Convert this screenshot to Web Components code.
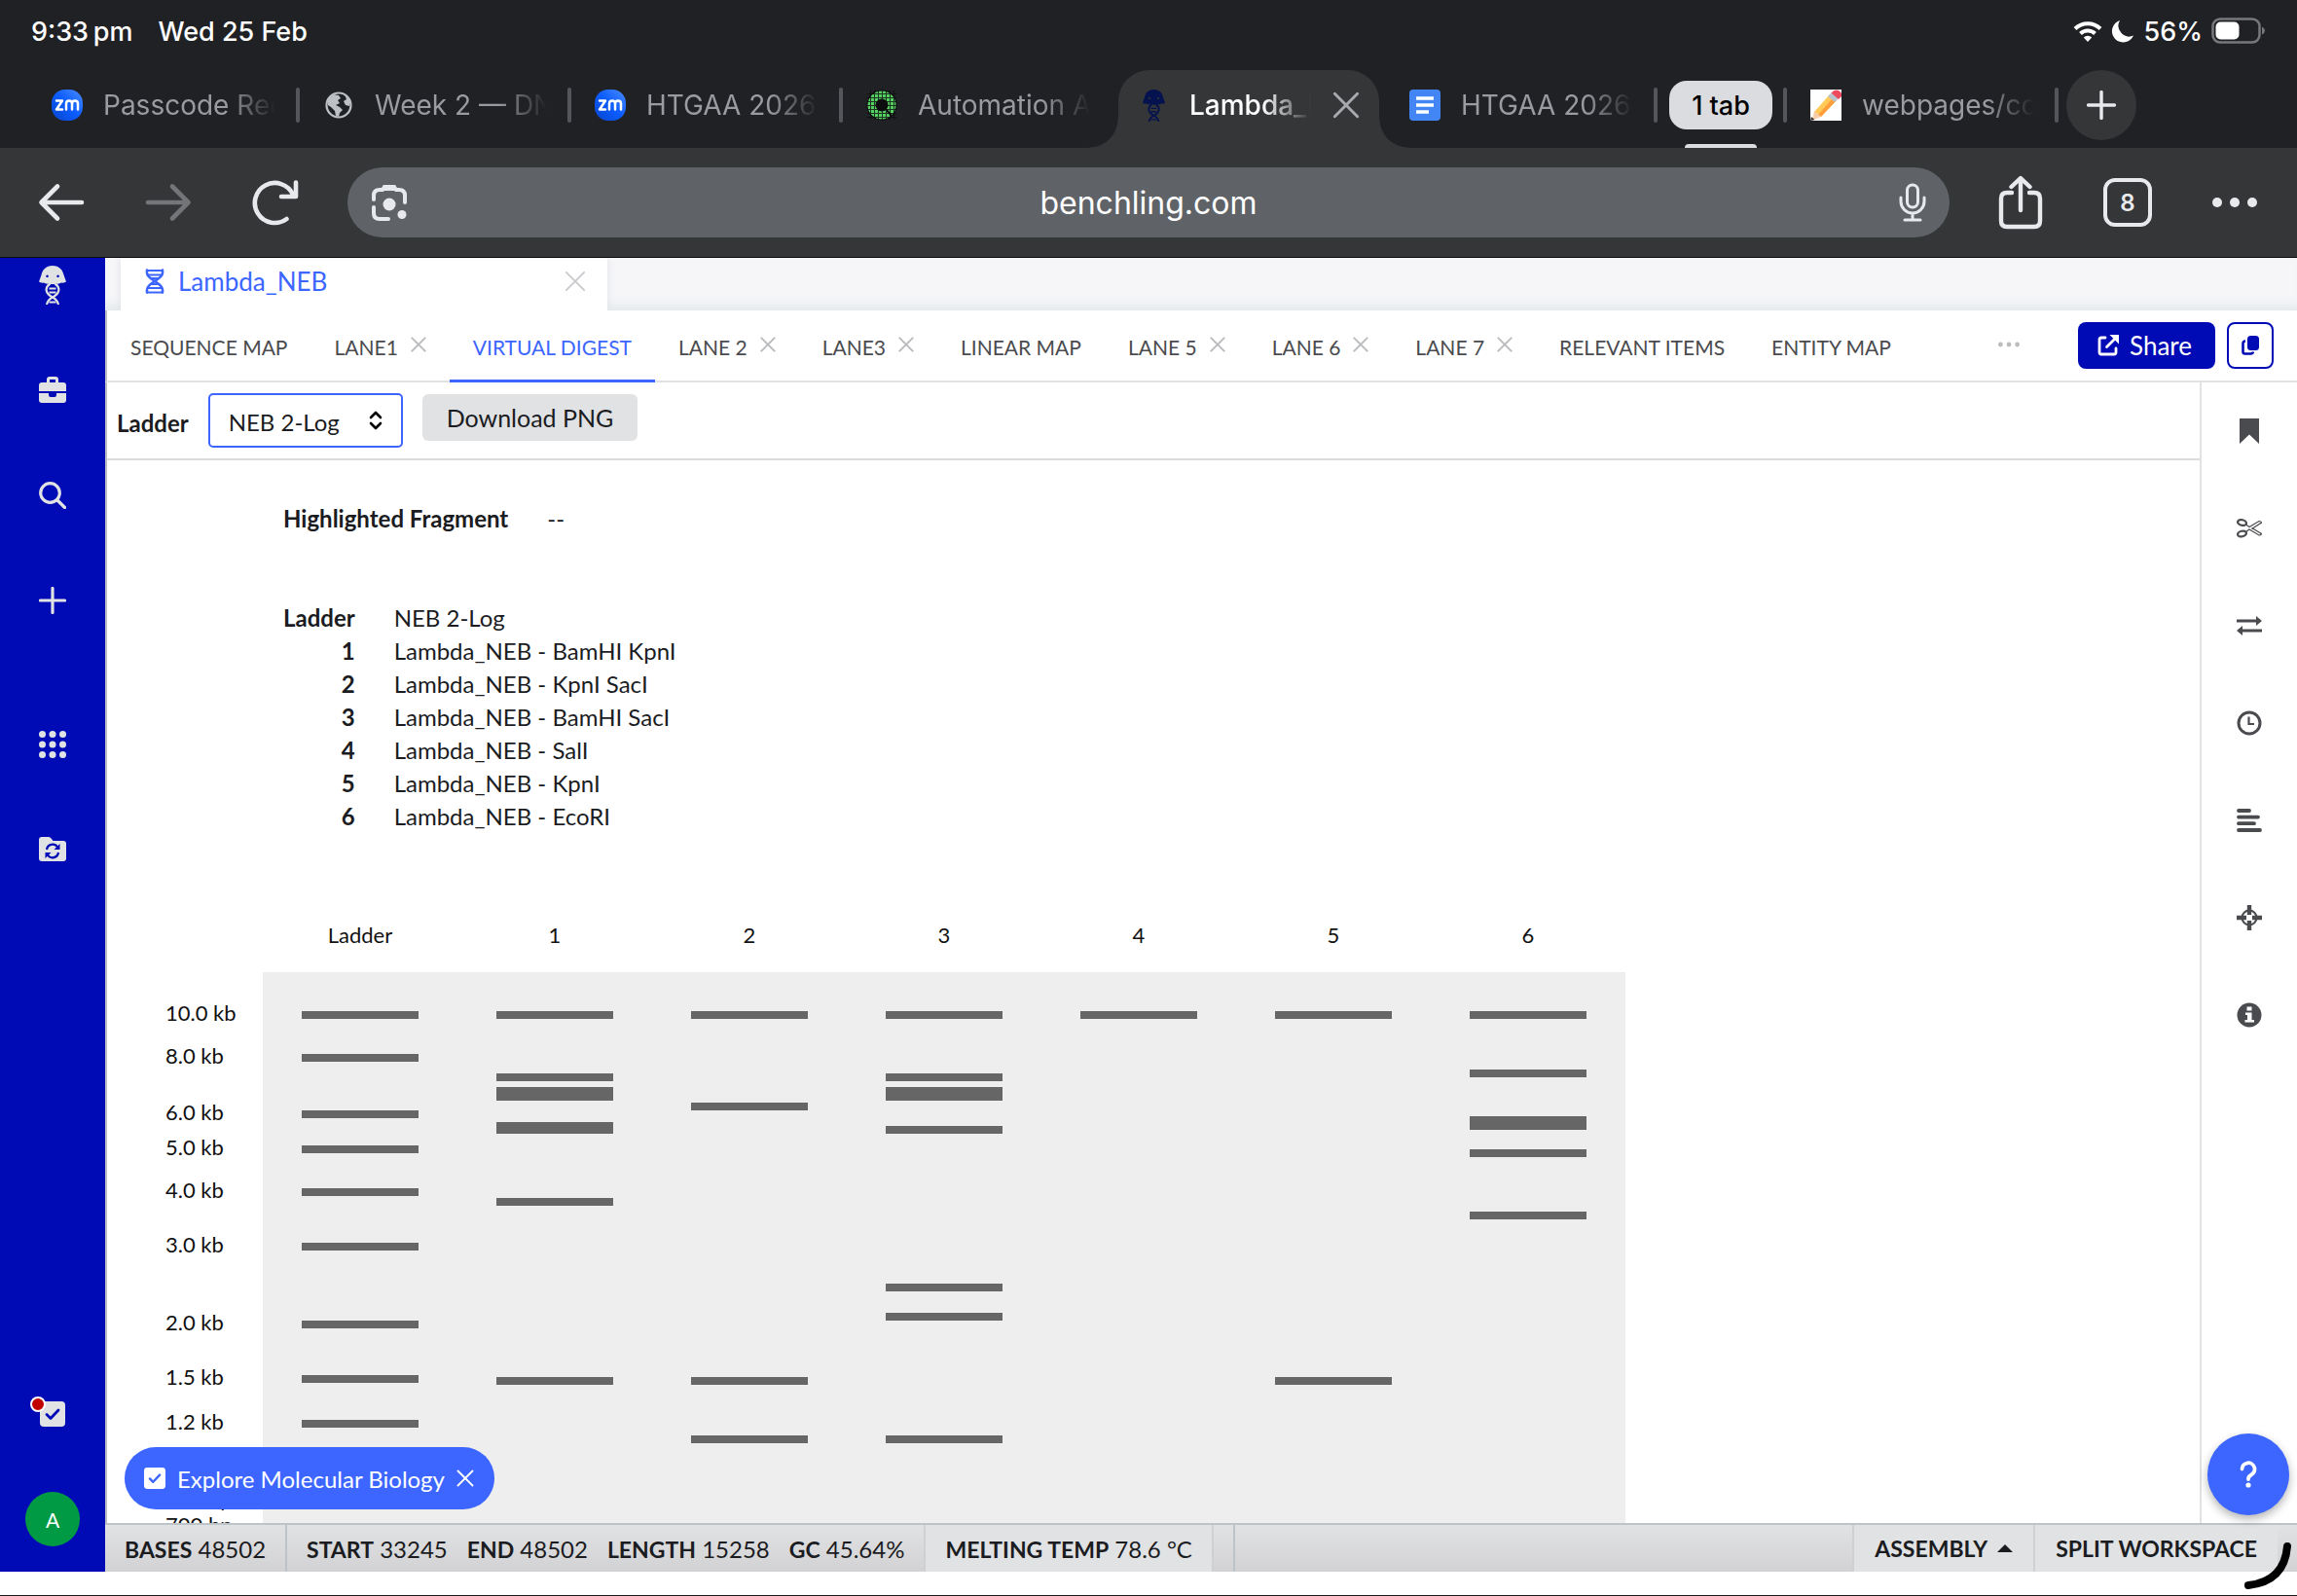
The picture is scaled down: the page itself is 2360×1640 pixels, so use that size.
<!DOCTYPE html>
<html lang="en">
<head>
<meta charset="utf-8">
<title>Lambda_NEB · Benchling</title>
<style>
  body {
    margin: 0;
    height: 100vh;
    display: flex;
    flex-direction: column;
    overflow: hidden;
    background: #fff;
    font-family: Lato, "Liberation Sans", sans-serif;
    font-size: 24px;
    color: #1b1c1f;
  }
  benchling-app { flex: 1; min-height: 0; }
  .home-edge { height: 24px; border-bottom: 1px solid #1a1a1c; }
</style>
</head>
<body>
<device-status></device-status>
<tab-strip>
  <browser-tab icon="zoom">Passcode Req</browser-tab>
  <browser-tab icon="globe">Week 2 — DNA</browser-tab>
  <browser-tab icon="zoom">HTGAA 2026</browser-tab>
  <browser-tab icon="ring" last>Automation Art</browser-tab>
  <browser-tab icon="jelly" active>Lambda_NEB</browser-tab>
  <browser-tab icon="docs">HTGAA 2026</browser-tab>
  <tab-group>1 tab</tab-group>
  <browser-tab icon="memo">webpages/con</browser-tab>
</tab-strip>
<browser-toolbar></browser-toolbar>
<benchling-app></benchling-app>
<div class="home-edge"></div>

<script>
const ICONS = {
  wifi: ['0 0 30 24', '<g fill="none" stroke="#fff" stroke-width="4"><path d="M2 9.500a18.500 18.500 0 0 1 26 0"/><path d="M7.500 14.500a10.800 10.800 0 0 1 15 0"/></g><path fill="#fff" d="M15 23l-4.200-4.600a6 6 0 0 1 8.400 0z"/>'],
  moon: ['0 0 24 24', '<path fill="#fff" d="M9 1a11.500 11.500 0 1 0 14 15.500A11 11 0 0 1 9 1z"/>'],
  battery: ['0 0 56 28', '<rect x="1.500" y="1.500" width="48" height="24" rx="7.500" fill="none" stroke="#77787b" stroke-width="2.500"/><rect x="4.500" y="4.500" width="24" height="18" rx="5" fill="#fff"/><path fill="#77787b" d="M52 9.500q3 1.500 3 4t-3 4z"/>'],
  zoom: ['0 0 32 32', '<defs><linearGradient id="z" x1="1" y1="0" x2="0" y2="1"><stop offset="0" stop-color="#4a8cff"/><stop offset=".5" stop-color="#0b5cff"/><stop offset="1" stop-color="#0845c8"/></linearGradient></defs><rect width="32" height="32" rx="14" fill="url(#z)"/><g fill="none" stroke="#fff" stroke-width="2.500" stroke-linejoin="round" stroke-linecap="round"><path d="M5 11.500h6l-6 9h6"/><path d="M15 20.500v-6q0-3 3-3t3 3v6M21 14.500q0-3 3-3t3 3v6"/></g>'],
  globe: ['0 0 32 32', '<circle cx="16" cy="16" r="12.500" fill="none" stroke="#bdc1c6" stroke-width="2.200"/><path fill="#bdc1c6" d="M5 10l6-5 5 1 2 3-3 2 2 3-4 2 4 2 3 3-3 3-1 4-3-1-1-5-4-4-3-2zM22 5l6 7-1 5-4-1-2-4 3-2z"/>'],
  ring: ['0 0 32 32', '<circle cx="16" cy="16" r="15.500" fill="#0d0d10"/><circle cx="16" cy="16" r="10.500" fill="none" stroke="#56cf62" stroke-width="8"/><path d="M1 4.500h30M1 8.500h30M1 12.500h30M1 16.500h30M1 20.500h30M1 24.500h30M1 28.500h30M4.500 1v30M8.500 1v30M12.500 1v30M16.500 1v30M20.500 1v30M24.500 1v30M28.500 1v30" stroke="#0d0d10" stroke-width="1" opacity=".8"/><path d="M14 13l12 14" stroke="#0d0d10" stroke-width="2"/>'],
  jelly: ['0 0 28 40', '<path fill="currentColor" fill-rule="evenodd" d="M14 0c7 0 10.500 4.500 11.500 9.500l2.500 7q-2 1.500-5 1-2 1.500-5 1-4 1-8 0-3 .5-5-1-3 .5-5-1l2.500-7C3.500 4.500 7 0 14 0zM8.500 9.500a1.300 1.300 0 1 0 .1 0zM19.500 9.500a1.300 1.300 0 1 0 .1 0z"/><g fill="none" stroke="currentColor" stroke-width="2.200"><path d="M11.500 18.500c-6 4-5 10 2.500 14q5 2.500 6 7.500M16.500 18.500c6 4 5 10-2.500 14q-5 2.500-6 7.500"/><path d="M10.500 23.500h7M10.500 27.500h7M10.500 37.500h7" stroke-width="1.800"/></g>'],
  docs: ['0 0 32 32', '<rect width="32" height="32" rx="4" fill="#4285f4"/><path stroke="#fff" stroke-width="3.400" d="M7 9h18M7 16h18M7 23h13"/>'],
  memo: ['0 0 32 32', '<path fill="#fff" d="M0 0h32v32H0z"/><path fill="#ffca55" d="M4 23L20 5l7 6L11 28z"/><path fill="#ff9f3c" d="M8 26L23.500 8l3.500 3L11 28z"/><path fill="#f7cda9" d="M4 22l7 6-9 3.500z"/><path fill="#3a2e2c" d="M1 28l3.500 3L0 32z"/><path fill="#b9c3cc" d="M18 7l4-4 7 6-4 4z"/><path fill="#ee4b5f" d="M21.500 3.500Q25-1 29 1q4 2 3 6l-3 3z"/>'],
  close: ['0 0 24 24', '<path d="M2 2l20 20M22 2L2 22" stroke="currentColor" stroke-width="var(--stroke, 2.500)" stroke-linecap="round"/>'],
  plus: ['0 0 28 28', '<path d="M14 1.500v25M1.500 14h25" stroke="currentColor" stroke-width="var(--stroke, 3.200)" stroke-linecap="round"/>'],
  back: ['0 0 48 40', '<path d="M45 20H4M20 3.500L3.500 20 20 36.500" fill="none" stroke="currentColor" stroke-width="4.600" stroke-linecap="round" stroke-linejoin="round"/>'],
  forward: ['0 0 48 40', '<path d="M3 20h41M28 3.500L44.500 20 28 36.500" fill="none" stroke="currentColor" stroke-width="4.600" stroke-linecap="round" stroke-linejoin="round"/>'],
  reload: ['0 0 48 48', '<path d="M35.500 41A20.500 20.500 0 1 1 42 16M45 3.500V18H30" fill="none" stroke="currentColor" stroke-width="4.600" stroke-linecap="round" stroke-linejoin="round"/>'],
  lens: ['0 0 38 38', '<g fill="none" stroke="currentColor" stroke-width="4" stroke-linecap="round"><path d="M3 16v-4q0-6 6-6h3l2-3h10l2 3h3q6 0 6 6v7M3 24v6q0 6 6 6h9"/></g><path fill="currentColor" d="M12 7l3-6h8l3 6z"/><circle cx="19" cy="21" r="6.500" fill="currentColor"/><circle cx="32" cy="31.500" r="4.500" fill="currentColor"/>'],
  mic: ['0 0 28 40', '<g fill="none" stroke="currentColor" stroke-width="3" stroke-linecap="round"><rect x="8.500" y="2" width="11" height="23" rx="5.500"/><path d="M2 15v4a12 12 0 0 0 24 0v-4M14 31v7M6 38h16"/></g>'],
  share: ['0 0 46 56', '<g fill="none" stroke="currentColor" stroke-width="4.400" stroke-linecap="round" stroke-linejoin="round"><path d="M14 18H9q-6 0-6 6v23q0 6 6 6h28q6 0 6-6V24q0-6-6-6h-5"/><path d="M23 36V4M13.500 12L23 3l9.500 9"/></g>'],
  dots: ['0 0 46 12', '<g fill="currentColor"><circle cx="5" cy="6" r="5"/><circle cx="23" cy="6" r="5"/><circle cx="41" cy="6" r="5"/></g>'],
  briefcase: ['0 0 28 28', '<path fill="currentColor" fill-rule="evenodd" d="M8 6V3q0-3 3-3h6q3 0 3 3v3h5q3 0 3 3v6H0V9q0-3 3-3zm3 0h6V3h-6zM0 17h10v2q0 2 2 2h4q2 0 2-2v-2h10v7q0 3-3 3H3q-3 0-3-3z"/>'],
  search: ['0 0 28 28', '<g fill="none" stroke="currentColor" stroke-width="3.200" stroke-linecap="round"><circle cx="11.500" cy="11.500" r="9.800"/><path d="M19 19l7.500 7.500"/></g>'],
  grid: ['0 0 28 28', '<g fill="currentColor">' + [3.5, 14, 24.5].map(y => [3.5, 14, 24.5].map(x => `<circle cx="${x}" cy="${y}" r="3.500"/>`).join('')).join('') + '</g>'],
  sync: ['0 0 28 26', '<path fill="currentColor" d="M0 3q0-3 3-3h7q1.500 0 3 2l1.500 2H25q3 0 3 3v15q0 3-3 3H3q-3 0-3-3z"/><g fill="none" stroke="#000bb5" stroke-width="2.200"><path d="M8 13a6 6 0 0 1 11-2.500M20 16a6 6 0 0 1-11 2.500"/></g><path fill="#000bb5" d="M21.500 7v6h-6zM6.500 22v-6h6z"/>'],
  tasks: ['0 0 26 26', '<rect width="26" height="26" rx="4" fill="currentColor"/><path d="M7 13.500l4 4 8-8.500" fill="none" stroke="var(--tick, #000bb5)" stroke-width="2.800" stroke-linecap="round" stroke-linejoin="round"/>'],
  dna: ['0 0 20 26', '<g fill="none" stroke="currentColor" stroke-width="2.600" stroke-linecap="round"><path d="M2 1.500v3c0 7 16 10 16 17v3M18 1.500v3c0 7-16 10-16 17v3"/><path d="M2 2h16M3 6.500h14M7 10h6M7 16h6M3 20h14M2 24.500h16" stroke-width="2"/></g>'],
  external: ['0 0 22 22', '<g fill="none" stroke="currentColor" stroke-width="2.800" stroke-linecap="round" stroke-linejoin="round"><path d="M8 3H4Q2 3 2 5v13q0 2 2 2h13q2 0 2-2v-4M9.500 12.500L19 3"/></g><path fill="currentColor" d="M12.500 0H22v9.500z"/>'],
  copy: ['0 0 18 20', '<rect x="6" y="0" width="12" height="15" rx="3.500" fill="currentColor"/><path d="M4 5.500Q1.500 5.500 1.500 8v8.500q0 2 2 2h6q2 0 2.500-2" fill="none" stroke="currentColor" stroke-width="2.600"/>'],
  chevrons: ['0 0 14 20', '<path d="M2 7l5-5 5 5M2 13l5 5 5-5" fill="none" stroke="#000" stroke-width="2.600" stroke-linecap="round" stroke-linejoin="round"/>'],
  bookmark: ['0 0 26 26', '<path fill="currentColor" d="M3 0h20v26l-10-9.500L3 26z"/>'],
  scissors: ['0 0 26 20', '<g fill="none" stroke="currentColor"><ellipse cx="5.500" cy="4" rx="4.500" ry="2.800" stroke-width="2.200" transform="rotate(12 5.500 4)"/><ellipse cx="5.500" cy="15.500" rx="4.500" ry="2.800" stroke-width="2.200" transform="rotate(-12 5.500 15.500)"/><path stroke-width="1.200" d="M9.500 6L13 8.500 23 2.500q2 0 2.500 1.500L15.500 10.500M9.500 13.500L13 11l10 6q2 0 2.500-1.500L15.500 9.500"/></g>'],
  swap: ['0 0 26 20', '<path fill="currentColor" d="M0 3.500h20V0l6 5-6 5V6.500H0zM26 13.500H6V10L0 15l6 5v-3.500h20z"/>'],
  clock: ['0 0 26 26', '<circle cx="13" cy="13" r="11" fill="none" stroke="currentColor" stroke-width="3"/><path d="M12.500 6.500V14H18" fill="none" stroke="currentColor" stroke-width="2.200"/>'],
  align: ['0 0 26 24', '<path fill="none" stroke="currentColor" stroke-width="3.800" stroke-linecap="round" d="M2 2h11M2 8.600h20M2 15.200h16M2 22h22"/>'],
  target: ['0 0 26 26', '<circle cx="13" cy="13" r="7.500" fill="none" stroke="currentColor" stroke-width="2"/><path stroke="currentColor" stroke-width="4.400" d="M13 0v10M13 16v10M0 13h10M16 13h10"/>'],
  info: ['0 0 26 26', '<circle cx="13" cy="13" r="12.500" fill="currentColor"/><path fill="#fff" d="M10.500 4.500h5v4h-5zM9 10.500h6.500V18H18v2.500H8.500V18h2.500v-5H9z"/>'],
  help: ['0 0 20 28', '<path d="M3.500 8.500a6.500 6.500 0 1 1 9.500 6Q10 16 10 19" fill="none" stroke="currentColor" stroke-width="3.800" stroke-linecap="round"/><circle cx="10" cy="25" r="2.600" fill="currentColor"/>'],
  caret: ['0 0 16 8', '<path fill="currentColor" d="M0 8l8-8 8 8z"/>']
};

// Styles every component shares
const BASE = `
  :host, *, *::before, *::after { box-sizing: border-box; }
  button { font: inherit; color: inherit; background: none; border: 0; padding: 0; margin: 0; cursor: pointer;
           display: flex; align-items: center; justify-content: center; }
  a { color: inherit; text-decoration: none; }
`;

class BaseElement extends HTMLElement {
  constructor() {
    super();
    this.attachShadow({ mode: 'open' });
  }

  connectedCallback() {
    this.shadowRoot.innerHTML = `<style>${BASE}${this.styles()}</style>${this.markup()}`;
  }
}

// <ui-icon name="plus" w="28">
class UiIcon extends BaseElement {
  styles() {
    return `:host { display: inline-flex; flex: none; } svg { display: block; }`;
  }

  markup() {
    const [box, body] = ICONS[this.getAttribute('name')];
    const [, , bw, bh] = box.split(' ').map(Number);
    const w = Number(this.getAttribute('w')) || bw;
    return `<svg width="${w}" height="${Math.round(w * bh / bw)}" viewBox="${box}" aria-hidden="true">${body}</svg>`;
  }
}

class DeviceStatus extends BaseElement {
  styles() {
    return `
      :host { display: flex; justify-content: space-between; align-items: center; height: 72px; padding: 0 32px 8px;
              background: #202124; color: #fff; font: 500 27px Inter, sans-serif; }
      div { display: flex; align-items: center; gap: 26px; }
      .right { gap: 9px; }
    `;
  }

  markup() {
    return `
      <div><span>9:33&#8201;pm</span><span>Wed 25 Feb</span></div>
      <div class="right"><ui-icon name="wifi"></ui-icon><ui-icon name="moon"></ui-icon><span>56%</span><ui-icon name="battery"></ui-icon></div>
    `;
  }
}

class TabStrip extends BaseElement {
  styles() {
    return `
      :host { display: flex; height: 80px; padding-left: 27px; background: #202124; color: #9a9ba1; font: 28px Inter, sans-serif; }
      .add { width: 72px; height: 72px; margin-left: 10px; border-radius: 50%; background: #353638; color: #e8e9ed; }
    `;
  }

  markup() {
    return `<slot></slot><button class="add" aria-label="New tab"><ui-icon name="plus" w="30"></ui-icon></button>`;
  }
}

class BrowserTab extends BaseElement {
  styles() {
    return `
      :host { display: flex; position: relative; width: 279px; height: 72px; align-items: center; padding: 0 23px 0 26px; }
      ui-icon { color: #04124f; width: 32px; justify-content: center; }
      .title { flex: 1; min-width: 0; margin-left: 21px; overflow: hidden; white-space: nowrap; text-align: left;
               -webkit-mask-image: linear-gradient(90deg, #000 calc(100% - 50px), transparent); }
      .rule { position: absolute; right: -2px; top: 18px; width: 4px; height: 36px; border-radius: 2px; background: #55565c; }
      :host([active]) .rule, :host([last]) .rule { display: none; }
      :host([active]) { color: #fff; height: 80px; padding-bottom: 8px; font-weight: 500; }
      :host([active])::before { content: ""; position: absolute; left: 6px; right: 5px; top: 0; bottom: 0;
                                background: #353638; border-radius: 32px 32px 0 0; }
      .flare { position: absolute; bottom: 0; width: 30px; height: 30px; }
      .flare.l { left: -24px; background: radial-gradient(circle at 0 0, transparent 29px, #353638 30px); }
      .flare.r { right: -25px; background: radial-gradient(circle at 100% 0, transparent 29px, #353638 30px); }
      :host([active]) ui-icon, :host([active]) .title, button { position: relative; }
      button ui-icon { color: #a9aaaf !important; }
      button { margin-left: 20px; }
    `;
  }

  markup() {
    const active = this.hasAttribute('active');
    return `
      <ui-icon name="${this.getAttribute('icon')}" w="${active ? 23 : 32}"></ui-icon>
      <span class="title"><slot></slot></span>
      ${active ? '<span class="flare l"></span><span class="flare r"></span><button aria-label="Close tab"><ui-icon name="close" w="28"></ui-icon></button>' : ''}
      <span class="rule"></span>
    `;
  }
}

class TabGroup extends BaseElement {
  styles() {
    return `
      :host { display: flex; flex-direction: column; align-items: center; justify-content: space-between; height: 80px;
              padding: 11px 13px 0 14px; position: relative; }
      button { height: 50px; width: 106px; border-radius: 18px; background: #dadce0; color: #000; font-weight: 500; font-size: 27px; }
      .under { width: 74px; height: 4px; border-radius: 4px 4px 0 0; background: #dadce0; }
      .rule { position: absolute; right: -2px; top: 18px; width: 4px; height: 36px; border-radius: 2px; background: #55565c; }
    `;
  }

  markup() {
    return `<button><slot></slot></button><span class="under"></span><span class="rule"></span>`;
  }
}

class BrowserToolbar extends BaseElement {
  styles() {
    return `
      :host { display: flex; align-items: center; height: 113px; padding: 0 41px 0 39px; background: #353638; color: #e8e9ed;
              border-bottom: 1px solid #0b0b0c; font-family: Inter, sans-serif; }
      .nav { display: flex; align-items: center; gap: 62px; }
      .nav .off { color: #747578; }
      .omni { flex: 1; display: flex; align-items: center; height: 72px; margin: 0 50px; padding: 0 24px; border-radius: 36px; background: #5f6368; }
      input { flex: 1; min-width: 0; border: 0; outline: 0; background: none; color: #fff; text-align: center; font: 32px Inter, sans-serif; padding: 0 10px 0 0; }
      .actions { display: flex; align-items: center; gap: 62px; }
      .count { width: 50px; height: 50px; border: 4px solid #e8e9ed; border-radius: 12px; font-size: 24px; font-weight: 600; }
    `;
  }

  markup() {
    return `
      <div class="nav">
        <button aria-label="Back"><ui-icon name="back"></ui-icon></button>
        <button aria-label="Forward" class="off"><ui-icon name="forward"></ui-icon></button>
        <button aria-label="Reload"><ui-icon name="reload"></ui-icon></button>
      </div>
      <div class="omni">
        <button aria-label="Search with Lens"><ui-icon name="lens"></ui-icon></button>
        <input type="text" aria-label="Address" value="benchling.com">
        <button aria-label="Voice search"><ui-icon name="mic"></ui-icon></button>
      </div>
      <div class="actions">
        <button aria-label="Share page"><ui-icon name="share"></ui-icon></button>
        <button aria-label="Open tabs" class="count">8</button>
        <button aria-label="More"><ui-icon name="dots"></ui-icon></button>
      </div>
    `;
  }
}

class SideNav extends BaseElement {
  styles() {
    return `
      :host { display: flex; flex-direction: column; align-items: center; width: 108px; flex: none; background: #000bb5; color: #e1e2e4; padding: 6px 0 26px; }
      a, button { height: 44px; display: flex; align-items: center; justify-content: center; position: relative; }
      nav { display: flex; flex-direction: column; align-items: center; gap: 64px; }
      .more { margin-top: 104px; }
      .bottom { margin-top: auto; display: flex; flex-direction: column; align-items: center; gap: 58px; }
      .dot { position: absolute; left: -10px; top: 4px; width: 16px; height: 16px; border-radius: 50%; background: #c10000; border: 2px solid #fff; }
      .avatar { width: 56px; height: 56px; border-radius: 50%; background: #009a44; color: #fff; font-size: 21px; }
    `;
  }

  markup() {
    return `
      <nav>
        <a href="#" aria-label="Home"><ui-icon name="jelly"></ui-icon></a>
        <a href="#projects" aria-label="Projects"><ui-icon name="briefcase"></ui-icon></a>
        <a href="#search" aria-label="Search"><ui-icon name="search"></ui-icon></a>
        <button aria-label="Create"><ui-icon name="plus"></ui-icon></button>
      </nav>
      <nav class="more">
        <a href="#apps" aria-label="Applications"><ui-icon name="grid"></ui-icon></a>
        <a href="#workflows" aria-label="Workflows"><ui-icon name="sync"></ui-icon></a>
      </nav>
      <div class="bottom">
        <a href="#tasks" aria-label="Tasks"><ui-icon name="tasks"></ui-icon><span class="dot"></span></a>
        <button class="avatar">A</button>
      </div>
    `;
  }
}

class ViewTab extends BaseElement {
  styles() {
    return `
      :host { display: flex; align-items: center; gap: 13px; height: 74px; padding: 0 24px; font-size: 21px; color: #4a4b4e; white-space: nowrap; }
      :host([active]) { color: #3c66ff; border-bottom: 3px solid #3c66ff; padding-top: 3px; }
      .close { color: #bbbcbe; padding-bottom: 4px; --stroke: 3; }
    `;
  }

  markup() {
    return `
      <button><slot></slot></button>
      ${this.hasAttribute('closable') ? '<button class="close" aria-label="Close"><ui-icon name="close" w="16"></ui-icon></button>' : ''}
    `;
  }
}

// Band rows are [top, height] in gel coordinates, height 8 when left out
const LADDER = [['10.0 kb', 99], ['8.0 kb', 143], ['6.0 kb', 201], ['5.0 kb', 237], ['4.0 kb', 281], ['3.0 kb', 337],
  ['2.0 kb', 417], ['1.5 kb', 473], ['1.2 kb', 519], ['800 bp', 598], ['700 bp', 625]];
const LANES = [
  ['Ladder', LADDER.map(([, y]) => [y])],
  ['1', [[99], [163], [177, 14], [213, 12], [291], [475]]],
  ['2', [[99], [193], [475], [535]]],
  ['3', [[99], [163], [177, 14], [217], [379], [409], [535]]],
  ['4', [[99]]],
  ['5', [[99], [475]]],
  ['6', [[99], [159], [207, 14], [241], [305]]]
];

class GelImage extends BaseElement {
  styles() {
    return `
      :host { display: block; }
      svg { display: block; }
      text { font-size: 22px; fill: #111; }
    `;
  }

  markup() {
    const lanes = LANES.map(([name, bands], i) => {
      const x = 140 + i * 200;
      return `
        <text x="${x + 60}" y="29" text-anchor="middle">${name}</text>
        ${bands.filter(([y]) => y < 590).map(([y, h = 8]) => `<rect x="${x}" y="${y}" width="120" height="${h}" fill="#666"/>`).join('')}
      `;
    }).join('');
    const sizes = LADDER.map(([label, y]) => `<text x="0" y="${y + 10}">${label}</text>`).join('');
    return `<svg width="1500" height="720" role="img" aria-label="Virtual digest gel">
      <rect x="100" y="59" width="1400" height="661" fill="#eee"/>${lanes}${sizes}</svg>`;
  }
}

class DigestView extends BaseElement {
  styles() {
    return `
      :host { display: flex; flex-direction: column; flex: 1; min-width: 0; }
      .tools { display: flex; align-items: center; height: 80px; flex: none; padding: 0 10px; border-bottom: 2px solid #d9dde0; }
      label { font-weight: 700; margin: 4px 20px 0 0; }
      .pick { position: relative; }
      .pick ui-icon { position: absolute; right: 21px; top: 18px; pointer-events: none; }
      select { appearance: none; display: block; height: 56px; width: 200px; padding: 3px 20px 0 19px; border: 2px solid #3c66ff; border-radius: 5px;
               background: #fff; color: inherit; font: 24px Lato, sans-serif; }
      .png { height: 48px; margin: 0 0 6px 20px; padding: 0 25px; border-radius: 6px; background: #e1e2e4; font-size: 25px; }
      .body { flex: 1; min-height: 0; overflow: hidden; padding: 42px 60px 0; }
      table { border-collapse: collapse; margin: 0 0 68px 121px; }
      .lanes { margin-bottom: 85px; }
      th, td { height: 34px; padding: 0; }
      th { text-align: right; padding-right: 40px; }
    `;
  }

  markup() {
    const rows = [['Ladder', 'NEB 2-Log'], ['1', 'Lambda_NEB - BamHI KpnI'], ['2', 'Lambda_NEB - KpnI SacI'],
      ['3', 'Lambda_NEB - BamHI SacI'], ['4', 'Lambda_NEB - SalI'], ['5', 'Lambda_NEB - KpnI'], ['6', 'Lambda_NEB - EcoRI']];
    return `
      <div class="tools">
        <label for="ladder">Ladder</label>
        <div class="pick">
          <select id="ladder"><option>NEB 2-Log</option></select>
          <ui-icon name="chevrons"></ui-icon>
        </div>
        <button class="png">Download PNG</button>
      </div>
      <div class="body">
        <table><tr><th scope="row">Highlighted Fragment</th><td>--</td></tr></table>
        <table class="lanes">
          ${rows.map(([lane, name]) => `<tr><th scope="row">${lane}</th><td>${name}</td></tr>`).join('')}
        </table>
        <gel-image></gel-image>
      </div>
    `;
  }
}

class ToolRail extends BaseElement {
  styles() {
    return `
      :host { display: flex; flex-direction: column; align-items: center; width: 100px; flex: none; border-left: 2px solid #e1e2e4; color: #4a4b4e; }
      button { height: 100px; width: 98px; }
    `;
  }

  markup() {
    return ['bookmark', 'scissors', 'swap', 'clock', 'align', 'target', 'info']
      .map(name => `<button aria-label="${name}"><ui-icon name="${name}"></ui-icon></button>`).join('');
  }
}

class SequenceStatus extends BaseElement {
  styles() {
    return `
      :host { display: flex; height: 50px; flex: none; border-top: 2px solid #bcc3c9; background: linear-gradient(#e1e2e4, #d2d2d4);
              font-size: 24px; white-space: nowrap; }
      .cell { display: flex; align-items: center; gap: 20px; padding: 0 20px; border-right: 2px solid #bcc3c9; }
      .flat { background: #e1e2e4; border-right: 2px solid #cfd0d3; }
      button.flat { gap: 10px; padding: 0 21px; font-size: 23px; font-weight: 700; }
      .edge { border-left: 2px solid #cfd0d3; }
      .gc { border-right-color: #cfd0d3; }
      .thin { padding: 0; width: 22px; }
      .right { display: flex; margin-left: auto; padding-right: 20px; }
      .right .flat:last-child { border-right: 0; }
      b { font-size: 23px; }
    `;
  }

  markup() {
    return `
      <div class="cell"><span><b>BASES</b> 48502</span></div>
      <div class="cell gc"><span><b>START</b> 33245</span><span><b>END</b> 48502</span><span><b>LENGTH</b> 15258</span><span><b>GC</b> 45.64%</span></div>
      <div class="cell flat"><span><b>MELTING TEMP</b> 78.6 °C</span></div>
      <div class="cell thin"></div>
      <div class="right">
        <button class="cell flat edge">ASSEMBLY <ui-icon name="caret"></ui-icon></button>
        <button class="cell flat">SPLIT WORKSPACE</button>
      </div>
    `;
  }
}

class BenchlingApp extends BaseElement {
  styles() {
    return `
      :host { display: flex; position: relative; }
      main { display: flex; flex-direction: column; flex: 1; min-width: 0; }
      .files { display: flex; height: 54px; flex: none; padding-left: 16px; background: #f6f6f9; box-shadow: inset 0 -12px 12px -8px #dfe6e9; }
      .file { display: flex; align-items: center; width: 500px; padding: 0 22px 6px 25px; background: #fff; color: #3c66ff; font-size: 26px; box-shadow: 0 0 8px #dfe0e4; clip-path: inset(0 -8px); }
      .file a { flex: 1; margin-left: 14px; }
      .file button { color: #c9cacd; --stroke: 2; }
      .views { display: flex; align-items: flex-start; height: 74px; flex: none; border-left: 2px solid #b9bcc4; border-bottom: 2px solid #e1e2e4; padding-right: 24px; }
      .spacer { flex: 1; }
      .dots { height: 70px; margin-right: 60px; color: #bbbcbe; }
      .share { height: 48px; padding: 0 24px 0 20px; margin: 12px 12px 0 0; border-radius: 8px; background: #000bb5; color: #fff; font-size: 26px; gap: 11px; }
      .copy { width: 48px; height: 48px; margin-top: 12px; border: 2px solid #000bb5; border-radius: 8px; color: #000bb5; }
      .work { display: flex; flex: 1; min-height: 0; border-left: 2px solid #b9bcc4; }
      .explore { position: absolute; left: 128px; bottom: 64px; height: 64px; padding: 0 21px 0 20px; display: flex; align-items: center; gap: 12px;
                 border-radius: 32px; background: #3c66ff; color: #fff; font-size: 24px; --tick: #3c66ff; }
      .help { position: absolute; right: 8px; bottom: 58px; width: 84px; height: 84px; border-radius: 50%; background: #3c66ff; color: #fff;
              box-shadow: 0 4px 10px rgba(0, 0, 0, .3); }
      .resize { position: absolute; right: 6px; bottom: -18px; }
    `;
  }

  markup() {
    return `
      <side-nav></side-nav>
      <main>
        <div class="files">
          <div class="file">
            <ui-icon name="dna"></ui-icon><a href="#lambda">Lambda_NEB</a>
            <button aria-label="Close file"><ui-icon name="close" w="22"></ui-icon></button>
          </div>
        </div>
        <div class="views">
          <view-tab>SEQUENCE MAP</view-tab>
          <view-tab closable>LANE1</view-tab>
          <view-tab active>VIRTUAL DIGEST</view-tab>
          <view-tab closable>LANE 2</view-tab>
          <view-tab closable>LANE3</view-tab>
          <view-tab>LINEAR MAP</view-tab>
          <view-tab closable>LANE 5</view-tab>
          <view-tab closable>LANE 6</view-tab>
          <view-tab closable>LANE 7</view-tab>
          <view-tab>RELEVANT ITEMS</view-tab>
          <view-tab>ENTITY MAP</view-tab>
          <span class="spacer"></span>
          <button class="dots" aria-label="More views"><ui-icon name="dots" w="22"></ui-icon></button>
          <button class="share"><ui-icon name="external"></ui-icon>Share</button>
          <button class="copy" aria-label="Copy"><ui-icon name="copy"></ui-icon></button>
        </div>
        <div class="work">
          <digest-view></digest-view>
          <tool-rail></tool-rail>
        </div>
        <sequence-status></sequence-status>
      </main>
      <div class="explore">
        <ui-icon name="tasks" w="22"></ui-icon>Explore Molecular Biology
        <button aria-label="Dismiss"><ui-icon name="close" w="18"></ui-icon></button>
      </div>
      <button class="help" aria-label="Help"><ui-icon name="help"></ui-icon></button>
      <svg class="resize" width="50" height="50" viewBox="0 0 50 50" aria-hidden="true">
        <path d="M46 6Q43 42 6 46" fill="none" stroke="#000" stroke-width="8" stroke-linecap="round"/>
      </svg>
    `;
  }
}

customElements.define('ui-icon', UiIcon);
customElements.define('device-status', DeviceStatus);
customElements.define('tab-strip', TabStrip);
customElements.define('browser-tab', BrowserTab);
customElements.define('tab-group', TabGroup);
customElements.define('browser-toolbar', BrowserToolbar);
customElements.define('side-nav', SideNav);
customElements.define('view-tab', ViewTab);
customElements.define('gel-image', GelImage);
customElements.define('digest-view', DigestView);
customElements.define('tool-rail', ToolRail);
customElements.define('sequence-status', SequenceStatus);
customElements.define('benchling-app', BenchlingApp);
</script>
</body>
</html>
